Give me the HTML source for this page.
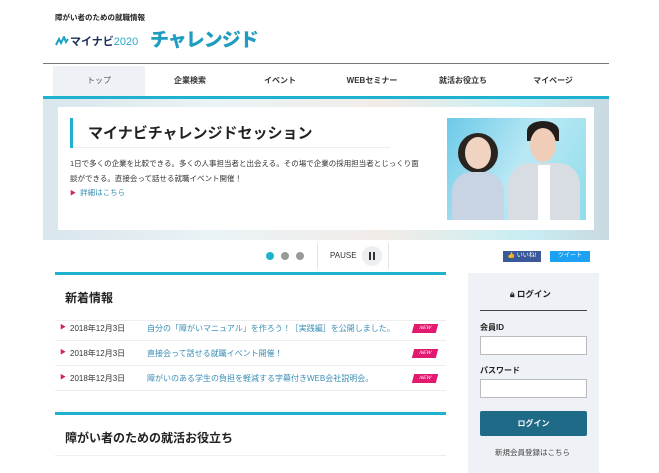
<!DOCTYPE html>
<html><head><meta charset="utf-8"><style>
*{margin:0;padding:0;box-sizing:border-box}
body{width:659px;height:473px;overflow:hidden;background:#fff;font-family:"Liberation Sans","Noto Sans CJK JP",sans-serif;color:#222;position:relative}
.a{position:absolute;white-space:nowrap}
.nav div{position:absolute;top:66px;height:30px;width:92px;text-align:center;line-height:30px;font-size:8px;font-weight:bold;color:#333}
.row{position:absolute;left:55px;width:391px;height:25px;border-bottom:1px solid #eee;font-size:8px;line-height:25px}
.row .tri{position:absolute;left:5px;color:#d0245c;font-size:6px}
.row .d{position:absolute;left:15px;color:#333}
.row .t{position:absolute;left:92px;color:#3a8db5}
.row .n{position:absolute;left:358px;top:8px;width:24px;height:9px;background:#e3186f;transform:skewX(-15deg);color:#fff;font-size:5px;line-height:9px;text-align:center;font-style:italic}
input{position:absolute;left:480px;width:107px;height:19px;border:1px solid #bbb;background:#fff}
</style></head><body>
<div class="a" style="left:55px;top:12px;font-size:7.5px;font-weight:bold">障がい者のための就職情報</div>
<svg class="a" style="left:55px;top:36px" width="15" height="10" viewBox="0 0 15 10"><path d="M1 9 L4 3 L6 7 L9 1 L11 6 L13 3" fill="none" stroke="#1aa3c4" stroke-width="2"/></svg>
<div class="a" style="left:70px;top:33px;font-size:11px;font-weight:bold;color:#1b2f5a">マイナビ<span style="color:#2ba7c9;font-weight:normal;font-size:11px">2020</span></div>
<div class="a" style="left:150px;top:25px;font-size:19px;font-weight:900;color:#1f9cbf;letter-spacing:-1px">チャレンジド</div>
<div class="a" style="left:43px;top:63px;width:566px;height:1px;background:#777"></div>
<div class="nav">
<div style="left:53px;background:#eef2f6;color:#555;font-weight:normal">トップ</div>
<div style="left:144px">企業検索</div>
<div style="left:234px">イベント</div>
<div style="left:326px">WEBセミナー</div>
<div style="left:417px">就活お役立ち</div>
<div style="left:507px">マイページ</div>
</div>
<div class="a" style="left:43px;top:96px;width:566px;height:3px;background:#1fb2cf"></div>
<div class="a" style="left:43px;top:99px;width:566px;height:141px;background:linear-gradient(90deg,#d9e6ec,#eaf3f6 30%,#f2ece8 60%,#c8eef4 85%,#c9d9e0)"></div>
<div class="a" style="left:58px;top:107px;width:536px;height:123px;background:#fff"></div>
<div class="a" style="left:70px;top:118px;width:3px;height:30px;background:#1fb2cf"></div>
<div class="a" style="left:73px;top:147px;width:317px;height:1px;background:#eee"></div>
<div class="a" style="left:88px;top:122px;font-size:15px;font-weight:bold">マイナビチャレンジドセッション</div>
<div class="a" style="left:70px;top:156px;font-size:7.5px;line-height:15px;color:#333">1日で多くの企業を比較できる。多くの人事担当者と出会える。その場で企業の採用担当者とじっくり面<br>談ができる。直接会って話せる就職イベント開催！</div>
<div class="a" style="left:70px;top:187px;font-size:7.5px;color:#3a8db5"><span style="color:#d0245c;font-size:6px">▶</span>&nbsp; 詳細はこちら</div>
<div class="a" style="left:447px;top:118px;width:139px;height:102px;background:linear-gradient(120deg,#6cc9e8,#b9e8f4 50%,#8fdcea)"></div>
<div class="a" style="left:458px;top:133px;width:40px;height:40px;border-radius:50%;background:#2a2420"></div>
<div class="a" style="left:465px;top:137px;width:26px;height:32px;border-radius:50%;background:#f1d3c2"></div>
<div class="a" style="left:452px;top:172px;width:52px;height:48px;border-radius:20px 20px 0 0;background:#c8d3e4"></div>
<div class="a" style="left:527px;top:121px;width:32px;height:20px;border-radius:50% 50% 0 0;background:#221c1a"></div>
<div class="a" style="left:530px;top:128px;width:26px;height:34px;border-radius:50%;background:#efcdb8"></div>
<div class="a" style="left:508px;top:163px;width:72px;height:57px;border-radius:22px 22px 0 0;background:#d8dde3"></div>
<div class="a" style="left:538px;top:165px;width:12px;height:55px;background:#fff"></div>
<div class="a" style="left:266px;top:252px;width:8px;height:8px;border-radius:50%;background:#1fb2cf"></div>
<div class="a" style="left:281px;top:252px;width:8px;height:8px;border-radius:50%;background:#999"></div>
<div class="a" style="left:296px;top:252px;width:8px;height:8px;border-radius:50%;background:#999"></div>
<div class="a" style="left:317px;top:243px;width:1px;height:26px;background:#e5e5e5"></div>
<div class="a" style="left:388px;top:243px;width:1px;height:26px;background:#e5e5e5"></div>
<div class="a" style="left:330px;top:251px;font-size:8px;color:#333">PAUSE</div>
<div class="a" style="left:362px;top:246px;width:20px;height:20px;border-radius:50%;background:#eceef1"></div>
<div class="a" style="left:369px;top:252px;width:2px;height:8px;background:#333"></div>
<div class="a" style="left:373px;top:252px;width:2px;height:8px;background:#333"></div>
<div class="a" style="left:503px;top:251px;width:38px;height:11px;background:#3b5998;color:#fff;font-size:6px;line-height:11px;text-align:center">👍 いいね!</div>
<div class="a" style="left:550px;top:251px;width:40px;height:11px;background:#1da1f2;color:#fff;font-size:6px;line-height:11px;text-align:center">ツイート</div>
<div class="a" style="left:55px;top:272px;width:391px;height:3px;background:#1fb2cf"></div>
<div class="a" style="left:65px;top:289px;font-size:12px;font-weight:bold">新着情報</div>
<div class="a" style="left:55px;top:320px;width:391px;height:1px;background:#eee"></div>
<div class="row" style="top:316px"><span class="tri">▶</span><span class="d">2018年12月3日</span><span class="t">自分の「障がいマニュアル」を作ろう！［実践編］を公開しました。</span><span class="n">NEW</span></div>
<div class="row" style="top:341px"><span class="tri">▶</span><span class="d">2018年12月3日</span><span class="t">直接会って話せる就職イベント開催！</span><span class="n">NEW</span></div>
<div class="row" style="top:366px"><span class="tri">▶</span><span class="d">2018年12月3日</span><span class="t">障がいのある学生の負担を軽減する字幕付きWEB会社説明会。</span><span class="n">NEW</span></div>
<div class="a" style="left:55px;top:412px;width:391px;height:3px;background:#1fb2cf"></div>
<div class="a" style="left:65px;top:429px;font-size:12px;font-weight:bold">障がい者のための就活お役立ち</div>
<div class="a" style="left:55px;top:455px;width:391px;height:1px;background:#eee"></div>
<div class="a" style="left:468px;top:273px;width:131px;height:200px;background:#eef1f6"></div>
<div class="a" style="left:510px;top:288px;font-size:8.5px;font-weight:bold">🔒︎ ログイン</div>
<div class="a" style="left:480px;top:310px;width:107px;height:1px;background:#444"></div>
<div class="a" style="left:480px;top:322px;font-size:8px;font-weight:bold">会員ID</div>
<input style="top:336px">
<div class="a" style="left:480px;top:365px;font-size:8px;font-weight:bold">パスワード</div>
<input style="top:379px">
<div class="a" style="left:480px;top:411px;width:107px;height:25px;background:#1e6a87;color:#fff;font-size:8px;font-weight:bold;text-align:center;line-height:25px;border-radius:2px">ログイン</div>
<div class="a" style="left:495px;top:447px;font-size:7.5px;color:#444">新規会員登録はこちら</div>
</body></html>
